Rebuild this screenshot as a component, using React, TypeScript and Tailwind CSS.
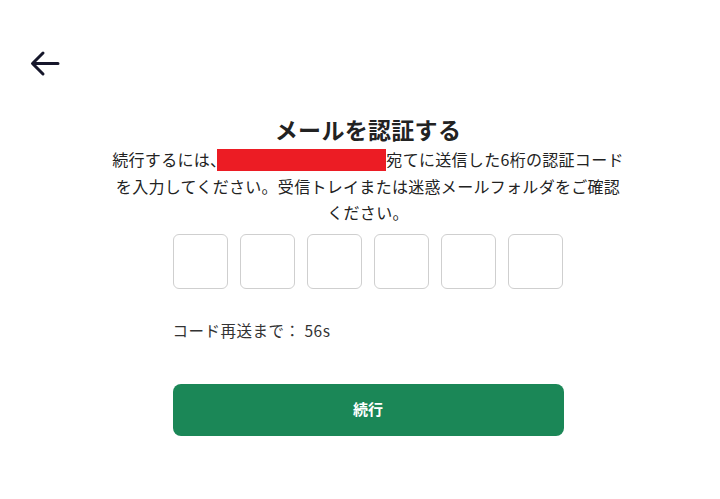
import React, { useState } from "react";

const font = { fontFamily: '"Noto Sans CJK JP", "Noto Sans", sans-serif' };

const App = () => {
  const [code] = useState(["", "", "", "", "", ""]);

  return (
    <div className="w-[720px] h-[499px] bg-white text-[#1f1f1f]" style={font}>
      {/* Back button */}
      <div className="pt-[50px] pl-[30px] h-[112px]">
        <button type="button" className="block">
          <svg width="30" height="28" viewBox="0 0 30 28" fill="none">
            <path
              d="M28 13.5H3.5M13 3L2.5 13.5L13 24"
              stroke="#16172b"
              strokeWidth="3"
              strokeLinecap="round"
              strokeLinejoin="round"
            />
          </svg>
        </button>
      </div>

      <div className="flex justify-center pl-[16px]">
        <div className="flex flex-col items-center w-[540px]">
          <h1 className="text-[23px] leading-[34px] font-bold text-[#222] tracking-[0.3px]">
            メールを認証する
          </h1>
          <p className="text-[16px] leading-[26.5px] tracking-[0.3px] text-center text-[#222]">
            続行するには、
            <span className="inline-block align-middle w-[169px] h-[22px] bg-[#ec1c24] -mt-[3px] -ml-[9px]" />
            宛てに送信した6桁の認証コード
            <br />
            を入力してください。受信トレイまたは迷惑メールフォルダをご確認
            <br />
            ください。
          </p>

          <div className="w-[391px] mt-[8px]">
            <div className="flex justify-between">
              {code.map((c, i) => (
                <input
                  key={i}
                  value={c}
                  readOnly
                  className="w-[55px] h-[55px] rounded-[6px] border border-[#cfcfcf] text-center text-xl focus:outline-none"
                />
              ))}
            </div>

            <p className="mt-[31px] text-[15.5px] leading-[20px] tracking-[0.5px] text-[#333]">
              コード再送まで： 56s
            </p>

            <button className="mt-[44px] w-full h-[52px] rounded-[8px] bg-[#1b8757] text-white text-[15px] font-bold">
              続行
            </button>
          </div>
        </div>
      </div>
    </div>
  );
};

export default App;
